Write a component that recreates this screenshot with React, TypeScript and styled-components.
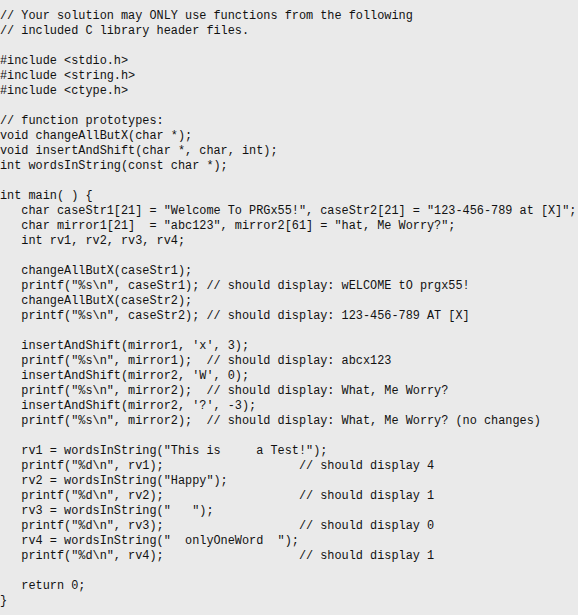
import React from "react";
import styled, { createGlobalStyle } from "styled-components";

const GlobalStyle = createGlobalStyle`
  html, body {
    margin: 0;
    padding: 0;
    background: #eaeaea;
  }
`;

const CodeBlock = styled.div`
  box-sizing: border-box;
  width: 578px;
  min-height: 615px;
  padding: 9px 0 0 0;
  background: #eaeaea;
  font-family: "Liberation Mono", "DejaVu Sans Mono", monospace;
  font-size: 11.87px;
  color: #111;
  display: flex;
  flex-direction: column;
`;

const Line = styled.div`
  white-space: pre;
  height: 15px;
  line-height: 15px;
`;

const code = `// Your solution may ONLY use functions from the following
// included C library header files.

#include <stdio.h>
#include <string.h>
#include <ctype.h>

// function prototypes:
void changeAllButX(char *);
void insertAndShift(char *, char, int);
int wordsInString(const char *);

int main( ) {
   char caseStr1[21] = "Welcome To PRGx55!", caseStr2[21] = "123-456-789 at [X]";
   char mirror1[21]  = "abc123", mirror2[61] = "hat, Me Worry?";
   int rv1, rv2, rv3, rv4;

   changeAllButX(caseStr1);
   printf("%s\\n", caseStr1); // should display: wELCOME tO prgx55!
   changeAllButX(caseStr2);
   printf("%s\\n", caseStr2); // should display: 123-456-789 AT [X]

   insertAndShift(mirror1, 'x', 3);
   printf("%s\\n", mirror1);  // should display: abcx123
   insertAndShift(mirror2, 'W', 0);
   printf("%s\\n", mirror2);  // should display: What, Me Worry?
   insertAndShift(mirror2, '?', -3);
   printf("%s\\n", mirror2);  // should display: What, Me Worry? (no changes)

   rv1 = wordsInString("This is     a Test!");
   printf("%d\\n", rv1);                   // should display 4
   rv2 = wordsInString("Happy");
   printf("%d\\n", rv2);                   // should display 1
   rv3 = wordsInString("   ");
   printf("%d\\n", rv3);                   // should display 0
   rv4 = wordsInString("  onlyOneWord  ");
   printf("%d\\n", rv4);                   // should display 1

   return 0;
}`;

export default function App() {
  const lines = code.split("\n");
  return (
    <>
      <GlobalStyle />
      <CodeBlock>
        {lines.map((l, i) => (
          <Line key={i}>{l.length ? l : " "}</Line>
        ))}
      </CodeBlock>
    </>
  );
}
